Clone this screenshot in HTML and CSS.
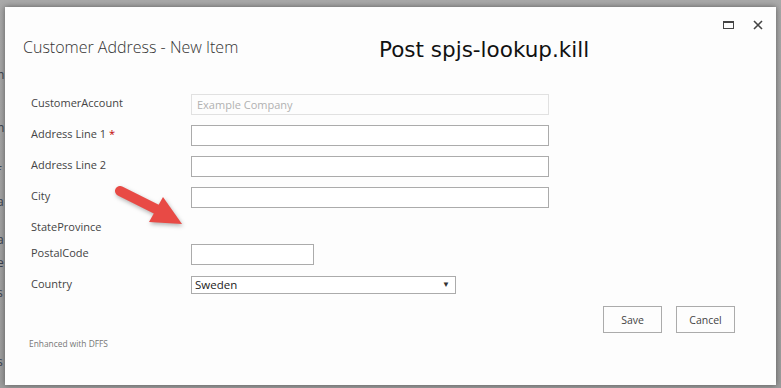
FILE: index.html
```html
<!DOCTYPE html>
<html lang="en">
<head>
    <meta charset="UTF-8">
    <meta name="viewport" content="width=device-width, initial-scale=1.0">
    <title>Customer Address - New Item</title>
    <link rel="stylesheet" href="styles.css">
</head>
<body>
    <div class="page-behind">
        <div class="frag">n</div>
        <div class="frag">n</div>
        <div class="frag">f</div>
        <div class="frag">a</div>
        <div class="frag">a</div>
        <div class="frag">e</div>
        <div class="frag">s</div>
        <div class="frag">s</div>
    </div>

    <div class="dialog">
        <div class="dialog-header">
            <h1 class="dialog-title">Customer Address - New Item</h1>
            <div class="note">Post spjs-lookup.kill</div>
            <div class="window-controls">
                <span class="ctrl-max"></span>
                <svg class="ctrl-close" width="10" height="10" viewBox="0 0 10 10">
                    <path d="M1 1 L9 9 M9 1 L1 9" stroke="#444" stroke-width="1.6" fill="none"/>
                </svg>
            </div>
        </div>

        <form class="item-form">
            <div class="form-row">
                <label class="field-label">CustomerAccount</label>
                <input class="field-input field-disabled" type="text" value="Example Company" disabled>
            </div>
            <div class="form-row">
                <label class="field-label">Address Line 1 <span class="required">*</span></label>
                <input class="field-input" type="text">
            </div>
            <div class="form-row">
                <label class="field-label">Address Line 2</label>
                <input class="field-input" type="text">
            </div>
            <div class="form-row">
                <label class="field-label">City</label>
                <input class="field-input" type="text">
            </div>
            <div class="form-row form-row-empty">
                <label class="field-label">StateProvince</label>
            </div>
            <div class="form-row">
                <label class="field-label">PostalCode</label>
                <input class="field-input field-short" type="text">
            </div>
            <div class="form-row">
                <label class="field-label">Country</label>
                <div class="select-wrap">
                    <select class="field-select">
                        <option>Sweden</option>
                    </select>
                    <span class="select-arrow">&#9660;</span>
                </div>
            </div>

            <div class="form-buttons">
                <button type="button" class="btn">Save</button>
                <button type="button" class="btn">Cancel</button>
            </div>
        </form>

        <div class="dialog-footer">Enhanced with DFFS</div>

        <svg class="arrow" width="84" height="60" viewBox="0 0 84 60">
            <line x1="12" y1="18" x2="50" y2="37" stroke="#e84a45" stroke-width="10" stroke-linecap="round"/>
            <polygon points="55,24 41,49 74,51" fill="#e84a45"/>
        </svg>
    </div>
</body>
</html>
```

FILE: styles.css
```css
html, body {
    margin: 0;
    padding: 0;
}
body {
    font-family: 'Segoe UI', 'Open Sans', sans-serif;
    background: linear-gradient(#a9a9a9, #9d9d9d);
    width: 781px;
    height: 388px;
    overflow: hidden;
    position: relative;
}
.page-behind {
    font-size: 12px;
    color: #3a4250;
    line-height: 14px;
    margin-left: -3px;
}
.frag:nth-child(1) { margin-top: 68px; }
.frag:nth-child(2) { margin-top: 39px; }
.frag:nth-child(3) { margin-top: 30px; }
.frag:nth-child(4) { margin-top: 16px; }
.frag:nth-child(5) { margin-top: 24px; }
.frag:nth-child(6) { margin-top: 9px; }
.frag:nth-child(7) { margin-top: 16px; }
.frag:nth-child(8) { margin-top: 55px; }
.dialog {
    position: absolute;
    left: 5px;
    top: 7px;
    width: 771px;
    height: 378px;
    background-color: #fdfdfd;
    box-shadow: 0 0 6px rgba(0, 0, 0, 0.45);
    color: #444;
}
.dialog-header {
    display: flex;
    height: 87px;
    box-sizing: border-box;
}
.dialog-title {
    margin: 0;
    padding: 28px 0 0 18px;
    width: 374px;
    box-sizing: border-box;
    font-size: 16px;
    font-weight: 300;
    line-height: 24px;
    color: #333;
    white-space: nowrap;
}
.note {
    padding-top: 31px;
    font-family: 'DejaVu Sans', sans-serif;
    font-size: 21.5px;
    line-height: 24px;
    color: #111;
    white-space: nowrap;
}
.window-controls {
    margin-left: auto;
    margin-right: 13px;
    margin-top: 13px;
    display: flex;
    align-items: center;
    gap: 19px;
    height: 10px;
}
.ctrl-max {
    display: block;
    width: 11px;
    height: 8px;
    box-sizing: border-box;
    border: 1px solid #444;
    border-top-width: 2px;
}
.ctrl-close {
    display: block;
}
.item-form {
    padding-left: 26px;
}
.form-row {
    display: flex;
    align-items: flex-start;
    min-height: 21px;
    margin-bottom: 10px;
}
.form-row-empty {
    min-height: 18px;
    margin-bottom: 8px;
}
.field-label {
    width: 160px;
    flex-shrink: 0;
    font-size: 11px;
    line-height: 18px;
    color: #444;
}
.required {
    color: #bf0000;
}
.field-input {
    width: 358px;
    height: 21px;
    box-sizing: border-box;
    border: 1px solid #ababab;
    background-color: #fff;
    padding: 0 5px;
    font-family: inherit;
    font-size: 11px;
    color: #444;
    margin: 0;
}
.field-disabled {
    border-color: #e1e1e1;
    background-color: #fdfdfd;
    color: #b1b1b1;
}
.field-short {
    width: 123px;
}
.select-wrap {
    position: relative;
    margin-top: 1px;
}
.field-select {
    appearance: none;
    -webkit-appearance: none;
    display: block;
    width: 265px;
    height: 18px;
    box-sizing: border-box;
    border: 1px solid #ababab;
    border-radius: 0;
    background-color: #fff;
    padding: 0 3px;
    font-family: inherit;
    font-size: 11.5px;
    line-height: 16px;
    color: #222;
    margin: 0;
}
.select-arrow {
    position: absolute;
    right: 6px;
    top: 3px;
    font-size: 8px;
    line-height: 10px;
    color: #333;
    pointer-events: none;
}
.form-buttons {
    display: flex;
    justify-content: flex-end;
    gap: 14px;
    padding-right: 41px;
    margin-top: 1px;
}
.btn {
    width: 59px;
    height: 27px;
    border: 1px solid #ababab;
    background-color: #fdfdfd;
    font-family: inherit;
    font-size: 10.5px;
    color: #444;
    padding: 0;
    cursor: pointer;
}
.btn:hover {
    background-color: #e6f2fa;
}
.dialog-footer {
    padding: 4px 0 0 24px;
    font-size: 8.4px;
    line-height: 14px;
    color: #777;
}
.arrow {
    position: absolute;
    left: 103px;
    top: 166px;
    filter: drop-shadow(1px 2px 2px rgba(0, 0, 0, 0.3));
}
```
